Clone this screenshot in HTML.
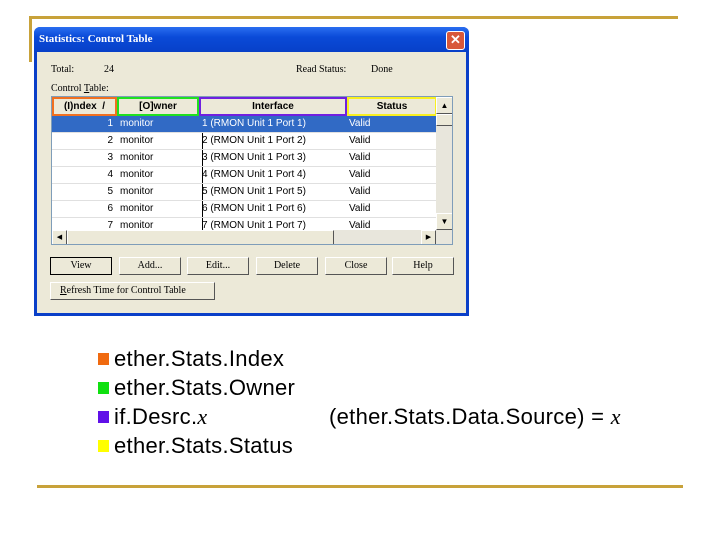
<!DOCTYPE html>
<html><head><style>
body{margin:0;width:720px;height:540px;background:#fff;position:relative;overflow:hidden;font-family:"Liberation Sans",sans-serif}
.a{position:absolute}
.g{background:#c8a23a}
.dlg{left:34px;top:27px;width:435px;height:289px;background:#0a3fc8;border-radius:6px 6px 0 0}
.tb{left:0;top:0;width:435px;height:25px;background:linear-gradient(#2a6ef0,#0a4ad8 40%,#0840c8);border-radius:6px 6px 0 0}
.body{left:3px;top:25px;width:429px;height:261px;background:#ece9d8}
.s{font-family:"Liberation Serif",serif;font-size:10px;color:#000}
.tbl{left:51px;top:96px;width:402px;height:149px;background:#fff;border:1px solid #7f9db9;box-sizing:border-box;overflow:hidden}
.hd{position:absolute;top:0;height:19px;box-sizing:border-box;font-size:10px;font-weight:bold;text-align:center;line-height:15px;background:#ece9d8}
.row{position:absolute;left:0;width:384px;height:17px;font-size:10px;line-height:16px;border-bottom:1px solid #e0e0e0;box-sizing:border-box}
.row span{position:absolute;top:0}
.btn{position:absolute;height:18px;background:#ece9d8;border:1px solid;border-color:#fff #555 #555 #fff;box-sizing:border-box;font-family:"Liberation Serif",serif;font-size:10px;text-align:center;line-height:16px}
.li{position:absolute;left:114px;font-size:22px;letter-spacing:0.3px;color:#000;line-height:24px}
.sq{position:absolute;left:98px;width:11px;height:12px}
</style></head><body>
<div class="a g" style="left:30px;top:16px;width:648px;height:3px"></div>
<div class="a g" style="left:29px;top:16px;width:3px;height:46px"></div>
<div class="a dlg">
 <div class="a tb"><div class="a s" style="left:5px;top:6px;color:#fff;font-weight:bold;font-size:11px">Statistics: Control Table</div>
 <div class="a" style="left:412px;top:4px;width:17px;height:17px;background:#d8583a;border:1px solid #fff;border-radius:3px;color:#fff;font-size:13px;line-height:16px;text-align:center;font-weight:bold">✕</div></div>
 <div class="a body"></div>
</div>
<div class="a s" style="left:51px;top:64px">Total:</div>
<div class="a s" style="left:104px;top:64px">24</div>
<div class="a s" style="left:296px;top:64px">Read Status:</div>
<div class="a s" style="left:371px;top:64px">Done</div>
<div class="a s" style="left:51px;top:83px">Control <u>T</u>able:</div>
<div class="a tbl">
 <div class="hd" style="left:0;width:65px;border:2px solid #f07020">(I)ndex &nbsp;/</div>
 <div class="hd" style="left:65px;width:82px;border:2px solid #20e020">[O]wner</div>
 <div class="hd" style="left:147px;width:148px;border:2px solid #7020e0">Interface</div>
 <div class="hd" style="left:295px;width:90px;border:2px solid #f8f020">Status</div>
 <div class="a" style="left:150px;top:36px;width:1px;height:112px;background:#000"></div>
 <div class="row" style="top:19px;background:#316ac5;color:#fff"><span style="right:323px">1</span><span style="left:68px">monitor</span><span style="left:150px">1 (RMON Unit 1 Port 1)</span><span style="left:297px">Valid</span></div>
 <div class="row" style="top:36px"><span style="right:323px">2</span><span style="left:68px">monitor</span><span style="left:150px">2 (RMON Unit 1 Port 2)</span><span style="left:297px">Valid</span></div>
 <div class="row" style="top:53px"><span style="right:323px">3</span><span style="left:68px">monitor</span><span style="left:150px">3 (RMON Unit 1 Port 3)</span><span style="left:297px">Valid</span></div>
 <div class="row" style="top:70px"><span style="right:323px">4</span><span style="left:68px">monitor</span><span style="left:150px">4 (RMON Unit 1 Port 4)</span><span style="left:297px">Valid</span></div>
 <div class="row" style="top:87px"><span style="right:323px">5</span><span style="left:68px">monitor</span><span style="left:150px">5 (RMON Unit 1 Port 5)</span><span style="left:297px">Valid</span></div>
 <div class="row" style="top:104px"><span style="right:323px">6</span><span style="left:68px">monitor</span><span style="left:150px">6 (RMON Unit 1 Port 6)</span><span style="left:297px">Valid</span></div>
 <div class="row" style="top:121px"><span style="right:323px">7</span><span style="left:68px">monitor</span><span style="left:150px">7 (RMON Unit 1 Port 7)</span><span style="left:297px">Valid</span></div>
 <div class="a" style="left:384px;top:0;width:17px;height:133px;background:#e8e6dc"></div>
 <div class="btn" style="left:384px;top:0;width:17px;height:17px;font-size:8px;line-height:15px">▲</div>
 <div class="btn" style="left:384px;top:17px;width:17px;height:12px"></div>
 <div class="btn" style="left:384px;top:116px;width:17px;height:17px;font-size:8px;line-height:15px">▼</div>
 <div class="a" style="left:0;top:133px;width:401px;height:15px;background:#e8e6dc"></div>
 <div class="btn" style="left:0;top:133px;width:15px;height:15px;font-size:7px;line-height:13px">◀</div>
 <div class="btn" style="left:15px;top:133px;width:267px;height:15px"></div>
 <div class="btn" style="left:369px;top:133px;width:15px;height:15px;font-size:7px;line-height:13px">▶</div>
</div>
<div class="btn" style="left:50px;top:257px;width:62px;border:1px solid #000">View</div>
<div class="btn" style="left:119px;top:257px;width:62px">Add...</div>
<div class="btn" style="left:187px;top:257px;width:62px">Edit...</div>
<div class="btn" style="left:256px;top:257px;width:62px">Delete</div>
<div class="btn" style="left:325px;top:257px;width:62px">Close</div>
<div class="btn" style="left:392px;top:257px;width:62px">Help</div>
<div class="btn" style="left:50px;top:282px;width:165px;text-align:left;padding-left:9px"><u>R</u>efresh Time for Control Table</div>

<div class="sq" style="top:353px;background:#f06a10"></div>
<div class="li" style="top:347px">ether.Stats.Index</div>
<div class="sq" style="top:382px;background:#10e010"></div>
<div class="li" style="top:376px">ether.Stats.Owner</div>
<div class="sq" style="top:411px;background:#6010e8"></div>
<div class="li" style="top:405px">if.Desrc.<i style="font-family:'Liberation Serif',serif">x</i></div>
<div class="sq" style="top:440px;background:#ffff00"></div>
<div class="li" style="top:434px">ether.Stats.Status</div>
<div class="li" style="left:329px;top:405px">(ether.Stats.Data.Source) = <i style="font-family:'Liberation Serif',serif">x</i></div>
<div class="a g" style="left:37px;top:485px;width:646px;height:3px"></div>
</body></html>
